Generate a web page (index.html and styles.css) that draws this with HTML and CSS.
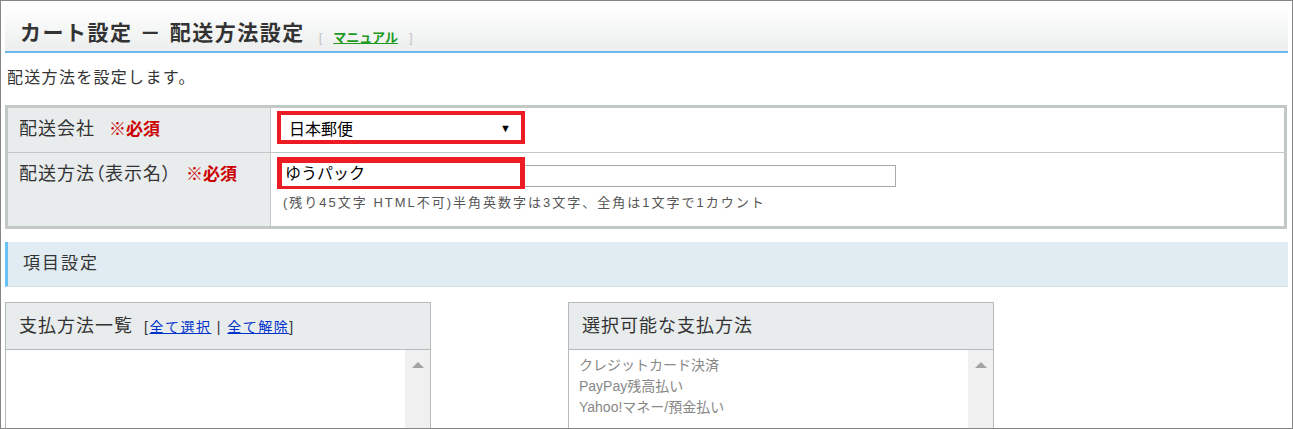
FILE: index.html
```html
<!DOCTYPE html>
<html>
    <head>
        <meta charset="utf-8">
        <title>配送方法設定</title>
        <link rel="stylesheet" href="styles.css">
    </head>
    <body>
        <div class="frame">
            <div class="page-head">
                <h1>カート設定 － 配送方法設定</h1>
                <span class="manual">[<a href="#">マニュアル</a>]</span>
            </div>
            <p class="lead">配送方法を設定します。</p>

            <table class="form">
                <tr class="row-company">
                    <th>配送会社<span class="req">※必須</span></th>
                    <td>
                        <div class="pick">日本郵便<span class="arrow">▼</span></div>
                    </td>
                </tr>
                <tr class="row-name">
                    <th>配送方法（表示名）<span class="req">※必須</span></th>
                    <td>
                        <div class="name-field">
                            <input type="text" class="name-input">
                            <div class="mark">ゆうパック</div>
                        </div>
                        <p class="hint">(残り45文字 HTML不可)半角英数字は3文字、全角は1文字で1カウント</p>
                    </td>
                </tr>
            </table>

            <div class="section">項目設定</div>

            <div class="lists">
                <div class="list-box">
                    <div class="list-head">支払方法一覧<span class="links">[<a href="#">全て選択</a> | <a href="#">全て解除</a>]</span></div>
                    <div class="list-body">
                        <ul class="items"></ul>
                        <div class="scroll"><span class="up"></span></div>
                    </div>
                </div>
                <div class="list-box">
                    <div class="list-head">選択可能な支払方法</div>
                    <div class="list-body">
                        <ul class="items">
                            <li>クレジットカード決済</li>
                            <li>PayPay残高払い</li>
                            <li>Yahoo!マネー/預金払い</li>
                        </ul>
                        <div class="scroll"><span class="up"></span></div>
                    </div>
                </div>
            </div>
        </div>
    </body>
</html>
```

FILE: styles.css
```css
body{
    margin: 0;
    font-family: "Liberation Sans", "Noto Sans CJK JP", sans-serif;
    color: #333;
    background: #fff;
}
.frame{
    height: 429px;
    box-sizing: border-box;
    border: 1px solid #858585;
    padding: 4px 4px 0 4px;
    overflow: hidden;
}

/* ページ見出し */
.page-head{
    height: 48px;
    box-sizing: border-box;
    padding: 10px 0 0 15px;
    display: flex;
    align-items: center;
    background: linear-gradient(to bottom, #ffffff, #eceeee);
    border-bottom: 2px solid #6ab8ec;
}
.page-head h1{
    margin: 0;
    font-size: 21px;
    letter-spacing: 1.5px;
    line-height: 30px;
    font-weight: bold;
    color: #333;
}
.manual{
    margin-left: 14px;
    margin-top: 6px;
    font-size: 13px;
    color: #c4c4c4;
}
.manual a{
    margin: 0 11px;
    color: #229a22;
    font-weight: bold;
}
.lead{
    margin: 14px 0 16px 2px;
    font-size: 16px;
    letter-spacing: 1.3px;
    line-height: 22px;
}

/* 入力テーブル */
.form{
    width: 1282px;
    border: 3px solid #c1c8c6;
    border-spacing: 0;
}
.form th{
    width: 251px;
    padding: 9px 0 0 11px;
    background: #e8ecec;
    border-right: 1px solid #c1c8c6;
    text-align: left;
    vertical-align: top;
    font-weight: normal;
    font-size: 18px;
    letter-spacing: 1px;
    line-height: 24px;
    font-feature-settings: "palt";
}
.form td{
    padding: 0 0 0 6px;
    vertical-align: top;
}
.row-company th,
.row-company td{
    border-bottom: 1px solid #c1c8c6;
}
.row-company td{
    height: 44px;
}
.row-name td{
    height: 73px;
}
.req{
    margin-left: 14px;
    color: #cc0000;
    font-weight: bold;
    font-size: 17px;
    letter-spacing: 0;
}
.pick{
    width: 248px;
    height: 33px;
    box-sizing: border-box;
    margin-top: 3px;
    padding: 0 10px 0 8px;
    border: 4px solid #ed1c24;
    display: flex;
    align-items: center;
    justify-content: space-between;
    font-size: 16px;
    color: #000;
}
.arrow{
    font-size: 11px;
}
.name-field{
    position: relative;
    height: 36px;
}
.name-input{
    margin: 12px 0 0 0;
    width: 619px;
    height: 22px;
    box-sizing: border-box;
    border: 1px solid #a9a9a9;
    padding: 0;
}
.mark{
    position: absolute;
    left: 0;
    top: 4px;
    width: 248px;
    height: 32px;
    box-sizing: border-box;
    border: 5px solid #ed1c24;
    border-top-width: 6px;
    border-bottom-width: 3px;
    background: #fff;
    padding-left: 3px;
    font-size: 16px;
    line-height: 22px;
    color: #000;
}
.hint{
    margin: 0 0 0 6px;
    font-size: 13px;
    letter-spacing: 2px;
    line-height: 28px;
    color: #555;
}

/* 項目設定 */
.section{
    margin-top: 13px;
    height: 44px;
    line-height: 44px;
    padding-left: 15px;
    background: #e1ecf2;
    border-left: 3px solid #68c0f4;
    border-bottom: 1px solid #d2dfe5;
    font-size: 17px;
    letter-spacing: 2px;
}
.lists{
    margin-top: 15px;
    display: flex;
    gap: 137px;
}
.list-box{
    width: 426px;
    box-sizing: border-box;
    border: 1px solid #b5bbbb;
}
.list-head{
    height: 46px;
    line-height: 46px;
    padding-left: 13px;
    background: #e8ecec;
    border-bottom: 1px solid #b5bbbb;
    font-size: 18px;
    letter-spacing: 1px;
}
.links{
    margin-left: 11px;
    font-size: 14px;
    letter-spacing: 1.5px;
}
.links a{
    color: #0033cc;
}
.list-body{
    display: flex;
    height: 100px;
}
.items{
    flex: 1;
    margin: 0;
    padding: 5px 0 0 10px;
    list-style: none;
    font-size: 14px;
    line-height: 21px;
    color: #888;
}
.scroll{
    width: 25px;
    background: #f0f0f0;
    display: flex;
    justify-content: center;
}
.up{
    margin-top: 12px;
    width: 0;
    height: 0;
    border-left: 6px solid transparent;
    border-right: 6px solid transparent;
    border-bottom: 6px solid #a3a3a3;
}
```
